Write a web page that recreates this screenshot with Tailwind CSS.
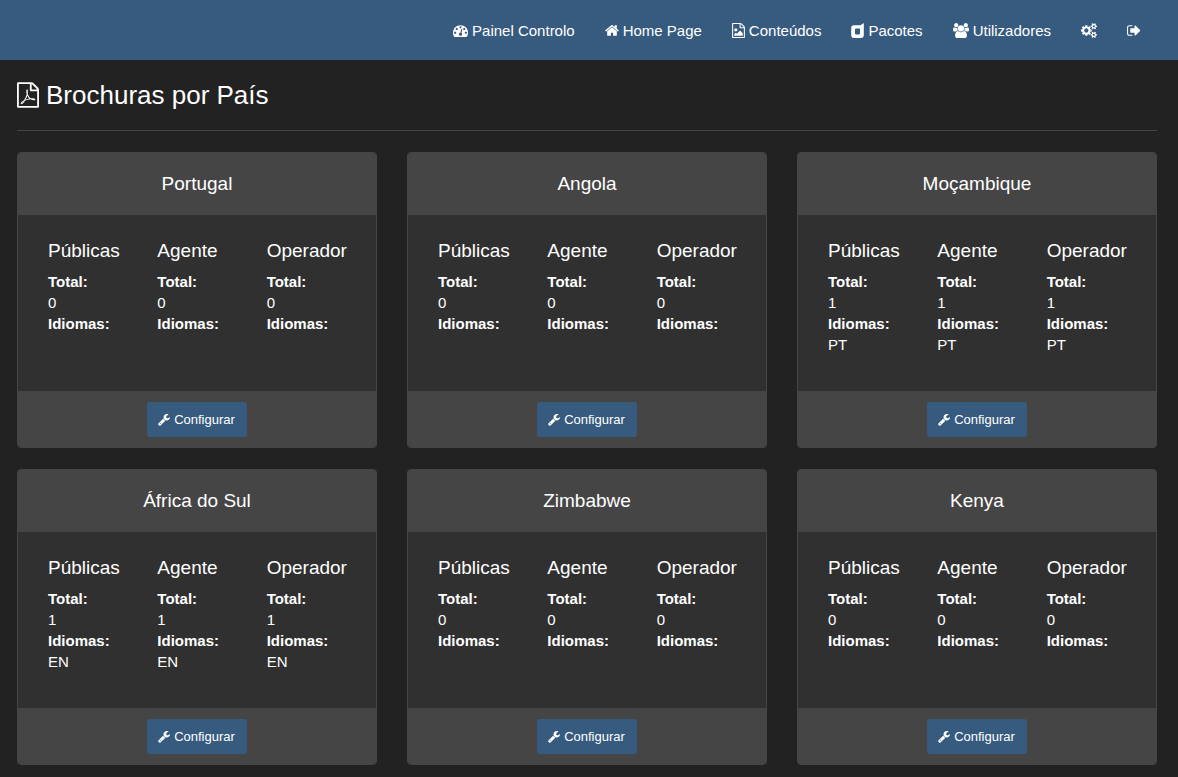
<!DOCTYPE html>
<html lang="pt">
<head>
<meta charset="utf-8">
<title>Brochuras por País</title>
<meta name="viewport" content="width=device-width, initial-scale=1">
<script src="https://cdn.jsdelivr.net/npm/@tailwindcss/browser@4"></script>
</head>
<body class="min-h-screen bg-[#222222] font-['Liberation_Sans',Arial,sans-serif] text-[15px] leading-[21px] text-white">
<svg class="hidden" aria-hidden="true">
  <symbol id="dashboard" viewBox="0 0 1792 1792"><path d="M384 1152q0-53-37.5-90.5t-90.5-37.5-90.5 37.5-37.5 90.5 37.5 90.5 90.5 37.5 90.5-37.5 37.5-90.5zm192-448q0-53-37.5-90.5t-90.5-37.5-90.5 37.5-37.5 90.5 37.5 90.5 90.5 37.5 90.5-37.5 37.5-90.5zm428 481l101-382q6-26-7.5-48.5t-38.5-29.5-48 6.5-30 39.5l-101 382q-60 5-107 43.5t-63 98.5q-20 77 20 146t117 89 146-20 89-117q16-60-6-117t-72-91zm660-33q0-53-37.5-90.5t-90.5-37.5-90.5 37.5-37.5 90.5 37.5 90.5 90.5 37.5 90.5-37.5 37.5-90.5zm-640-640q0-53-37.5-90.5t-90.5-37.5-90.5 37.5-37.5 90.5 37.5 90.5 90.5 37.5 90.5-37.5 37.5-90.5zm448 192q0-53-37.5-90.5t-90.5-37.5-90.5 37.5-37.5 90.5 37.5 90.5 90.5 37.5 90.5-37.5 37.5-90.5zm320 448q0 261-141 483-19 29-54 29h-1402q-35 0-54-29-141-221-141-483 0-182 71-348t191-286 286-191 348-71 348 71 286 191 191 286 71 348z"/></symbol>
  <symbol id="home" viewBox="64 0 1664 1792"><path d="M1472 992v480q0 26-19 45t-45 19h-384v-384h-256v384h-384q-26 0-45-19t-19-45v-480q0-1 .5-3t.5-3l575-474 575 474q1 2 1 6zm223-69l-62 74q-8 9-21 11h-3q-13 0-21-7l-692-577-692 577q-12 8-24 7-13-2-21-11l-62-74q-8-10-7-23.5t11-21.5l719-599q32-26 76-26t76 26l244 204v-195q0-14 9-23t23-9h192q14 0 23 9t9 23v408l219 182q10 8 11 21.5t-7 23.5z"/></symbol>
  <symbol id="image" viewBox="128 0 1536 1792"><path d="M1596 380q28 28 48 76t20 88v1152q0 40-28 68t-68 28h-1344q-40 0-68-28t-28-68v-1600q0-40 28-68t68-28h896q40 0 88 20t76 48zm-444-244v376h376q-10-29-22-41l-313-313q-12-12-41-22zm384 1528v-1024h-416q-40 0-68-28t-28-68v-416h-768v1536h1280zm-128-448v320h-1024v-192l192-192 128 128 384-384zm-832-192q-80 0-136-56t-56-136 56-136 136-56 136 56 56 136-56 136-136 56z"/></symbol>
  <symbol id="pdf" viewBox="128 0 1536 1792"><path d="M1596 380q28 28 48 76t20 88v1152q0 40-28 68t-68 28h-1344q-40 0-68-28t-28-68v-1600q0-40 28-68t68-28h896q40 0 88 20t76 48zm-444-244v376h376q-10-29-22-41l-313-313q-12-12-41-22zm384 1528v-1024h-416q-40 0-68-28t-28-68v-416h-768v1536h1280zm-514-593q33 26 84 56 59-7 117-7 147 0 177 49 16 22 2 52 0 1-1 2l-2 2v1q-6 38-71 38-48 0-115-20t-130-53q-221 24-392 83-153 262-242 262-15 0-28-7l-24-12q-1-1-6-5-10-10-6-36 9-40 56-91.5t132-96.5q14-9 23 6 2 2 2 4 52-85 107-197 68-136 104-262-24-82-30.5-159.5t6.5-127.5q11-40 42-40h22q23 0 35 15 18 21 9 68-2 6-4 8 1 3 1 8v30q-2 123-14 192 55 164 146 238zm-576 411q52-24 137-158-51 40-87.5 84t-49.5 74zm398-920q-15 42-2 132 1-7 7-44 0-3 7-43 1-4 4-8-1-1-1-2-1-2-1-3-1-22-13-36 0 1-1 2v2zm-124 661q135-54 284-81-2-1-13-9.5t-16-13.5q-76-67-127-176-27 86-83 197-30 56-45 83zm646-16q-24-24-140-24 76 28 124 28 14 0 18-1 0-1-2-3z"/></symbol>
  <symbol id="package" viewBox="0 0 13 15"><path fill-rule="evenodd" d="M3 2.200H9.500L12.800 0V12Q12.800 15 9.800 15H3Q.2 15 .2 12V5Q.2 2.200 3 2.200ZM5 5.500Q4 5.500 4 6.500V10.500Q4 11.500 5 11.500H8Q9 11.500 9 10.500V5.500Z"/></symbol>
  <symbol id="users" viewBox="0 0 1920 1792"><path d="M593 896q-162 5-265 128h-134q-82 0-138-40.500t-56-118.500q0-353 124-353 6 0 43.500 21t97.500 42.500 119 21.500q67 0 133-23-5 37-5 66 0 139 81 256zm1071 637q0 120-73 189.500t-194 69.500h-874q-121 0-194-69.500t-73-189.500q0-53 3.500-103.500t14-109 26.500-108.500 43-97.500 62-81 85.500-53.500 111.500-20q10 0 43 21.500t73 48 107 48 135 21.500 135-21.500 107-48 73-48 43-21.500q61 0 111.500 20t85.500 53.500 62 81 43 97.500 26.500 108.500 14 109 3.500 103.500zm-1024-1277q0 106-75 181t-181 75-181-75-75-181 75-181 181-75 181 75 75 181zm704 384q0 159-112.500 271.500t-271.500 112.500-271.500-112.500-112.500-271.500 112.500-271.500 271.500-112.500 271.500 112.500 112.500 271.500zm576 225q0 78-56 118.500t-138 40.500h-134q-103-123-265-128 81-117 81-256 0-29-5-66 66 23 133 23 59 0 119-21.500t97.500-42.500 43.500-21q124 0 124 353zm-128-609q0 106-75 181t-181 75-181-75-75-181 75-181 181-75 181 75 75 181z"/></symbol>
  <symbol id="cogs" viewBox="0 0 1920 1792"><path d="M896 896q0-106-75-181t-181-75-181 75-75 181 75 181 181 75 181-75 75-181zm768 512q0-52-38-90t-90-38-90 38-38 90q0 53 37.500 90.500t90.500 37.500 90.500-37.500 37.500-90.500zm0-1024q0-52-38-90t-90-38-90 38-38 90q0 53 37.500 90.500t90.500 37.500 90.500-37.500 37.500-90.500zm-384 421v185q0 10-7 19.500t-16 10.500l-155 24q-11 35-32 76 34 48 90 115 7 11 7 20 0 12-7 19-23 30-82.500 89.500t-78.500 59.500q-11 0-21-7l-115-90q-37 19-77 31-11 108-23 155-7 24-30 24h-186q-11 0-20-7.500t-10-17.500l-23-153q-34-10-75-31l-118 89q-7 7-20 7-11 0-21-8-144-133-144-160 0-9 7-19 10-14 41-53t47-61q-23-44-35-82l-152-24q-10-1-17-9.500t-7-19.500v-185q0-10 7-19.500t16-10.500l155-24q11-35 32-76-34-48-90-115-7-11-7-20 0-12 7-20 22-30 82-89t79-59q11 0 21 7l115 90q34-18 77-32 11-108 23-154 7-24 30-24h186q11 0 20 7.500t10 17.500l23 153q34 10 75 31l118-89q8-7 20-7 11 0 21 8 144 133 144 160 0 8-7 19-12 16-42 54t-45 60q23 48 34 82l152 23q10 2 17 10.500t7 19.500zm640 533v140q0 16-149 31-12 27-30 52 51 113 51 138 0 4-4 7-122 71-124 71-8 0-46-47t-52-68q-20 2-30 2t-30-2q-14 21-52 68t-46 47q-2 0-124-71-4-3-4-7 0-25 51-138-18-25-30-52-149-15-149-31v-140q0-16 149-31 13-29 30-52-51-113-51-138 0-4 4-7 4-2 35-20t59-34 30-16q8 0 46 46.500t52 67.500q20-2 30-2t30 2q51-71 92-112l6-2q4 0 124 70 4 3 4 7 0 25-51 138 17 23 30 52 149 15 149 31zm0-1024v140q0 16-149 31-12 27-30 52 51 113 51 138 0 4-4 7-122 71-124 71-8 0-46-47t-52-68q-20 2-30 2t-30-2q-14 21-52 68t-46 47q-2 0-124-71-4-3-4-7 0-25 51-138-18-25-30-52-149-15-149-31v-140q0-16 149-31 13-29 30-52-51-113-51-138 0-4 4-7 4-2 35-20t59-34 30-16q8 0 46 46.500t52 67.500q20-2 30-2t30 2q51-71 92-112l6-2q4 0 124 70 4 3 4 7 0 25-51 138 17 23 30 52 149 15 149 31z"/></symbol>
  <symbol id="signout" viewBox="64 0 1664 1792"><path d="M704 1440q0 4 1 20t.5 26.500-3 23.500-10 19.500-20.500 6.500h-320q-119 0-203.500-84.500t-84.500-203.500v-704q0-119 84.500-203.500t203.500-84.500h320q13 0 22.500 9.500t9.500 22.500q0 4 1 20t.5 26.500-3 23.500-10 19.500-20.500 6.500h-320q-66 0-113 47t-47 113v704q0 66 47 113t113 47h312l11.500 1 11.500 3 8 5.500 7 9 2 13.500zm928-544q0 26-19 45l-544 544q-19 19-45 19t-45-19-19-45v-288h-448q-26 0-45-19t-19-45v-384q0-26 19-45t45-19h448v-288q0-26 19-45t45-19 45 19l544 544q19 19 19 45z"/></symbol>
  <symbol id="wrench" viewBox="64 0 1664 1792"><path d="M448 1472q0-26-19-45t-45-19-45 19-19 45 19 45 45 19 45-19 19-45zm644-420l-682 682q-37 37-90 37-52 0-91-37l-106-108q-38-36-38-90 0-53 38-91l681-681q39 98 114.500 173.500t173.500 114.500zm634-435q0 39-23 106-47 134-164.500 217.500t-258.500 83.500q-185 0-316.500-131.500t-131.500-316.500 131.500-316.500 316.500-131.500q58 0 121.500 16.500t107.500 46.500q16 11 16 28t-16 28l-293 169v224l193 107q5-3 79-48.500t135.500-81 70.500-35.500q15 0 23.500 10t8.500 25z"/></symbol>
</svg>

<nav class="flex min-h-[60px] flex-wrap items-center justify-end gap-[30px] bg-[#375a7f] px-[37px]">
  <a href="#" class="flex items-center gap-1"><svg class="h-[15px] w-[15px] fill-current"><use href="#dashboard"/></svg>Painel Controlo</a>
  <a href="#" class="flex items-center gap-1"><svg class="h-[15px] w-[14px] fill-current"><use href="#home"/></svg>Home Page</a>
  <a href="#" class="flex items-center gap-1"><svg class="h-[15px] w-[13px] fill-current"><use href="#image"/></svg>Conteúdos</a>
  <a href="#" class="flex items-center gap-1"><svg class="h-[15px] w-[13px] fill-current"><use href="#package"/></svg>Pacotes</a>
  <a href="#" class="flex items-center gap-1"><svg class="h-[15px] w-4 fill-current"><use href="#users"/></svg>Utilizadores</a>
  <a href="#" aria-label="Configurações"><svg class="h-[15px] w-4 fill-current"><use href="#cogs"/></svg></a>
  <a href="#" aria-label="Sair"><svg class="h-[15px] w-[14px] fill-current"><use href="#signout"/></svg></a>
</nav>

<main class="pr-[21px] pl-[17px]">
  <h1 class="flex items-center gap-[7px] border-b border-[#464545] pt-5 pb-5 text-[26px] leading-[30px]"><svg class="h-[26px] w-[22px] fill-current"><use href="#pdf"/></svg>Brochuras por País</h1>
  <div id="cards" class="grid grid-cols-3 gap-x-[30px] gap-y-[21px] pt-[21px] pb-3"></div>
</main>

<template id="card">
  <section class="overflow-hidden rounded border border-[#464545] bg-[#303030]">
    <h2 class="border-b border-[#464545] bg-[#464545] py-5 text-center text-[19px] leading-[21px]"></h2>
    <div class="grid min-h-[176px] grid-cols-3 content-start pt-[25px] pl-[30px]"></div>
    <div class="flex justify-center border-t border-[#464545] bg-[#464545] py-[10px]">
      <button type="button" class="flex h-[35px] cursor-pointer items-center gap-1 rounded-[3px] bg-[#375a7f] pr-3 pl-[11px] text-[13px]"><svg class="h-[13px] w-3 fill-current"><use href="#wrench"/></svg>Configurar</button>
    </div>
  </section>
</template>
<template id="column">
  <div>
    <h3 class="mb-[10px] text-[19px] leading-[21px]"></h3>
    <dl><dt class="font-bold">Total:</dt><dd></dd><dt class="font-bold">Idiomas:</dt><dd></dd></dl>
  </div>
</template>
<script>
const countries = [
  ['Portugal', '0', ''], ['Angola', '0', ''], ['Moçambique', '1', 'PT'],
  ['África do Sul', '1', 'EN'], ['Zimbabwe', '0', ''], ['Kenya', '0', '']
];
const cardTemplate = document.getElementById('card').content;
const columnTemplate = document.getElementById('column').content;
for (const [name, total, language] of countries) {
  const card = cardTemplate.cloneNode(true);
  card.querySelector('h2').textContent = name;
  for (const type of ['Públicas', 'Agente', 'Operador']) {
    const column = columnTemplate.cloneNode(true);
    const values = column.querySelectorAll('dd');
    column.querySelector('h3').textContent = type;
    values[0].textContent = total;
    values[1].textContent = language;
    card.querySelector('section > div').append(column);
  }
  document.getElementById('cards').append(card);
}
</script>
</body>
</html>
